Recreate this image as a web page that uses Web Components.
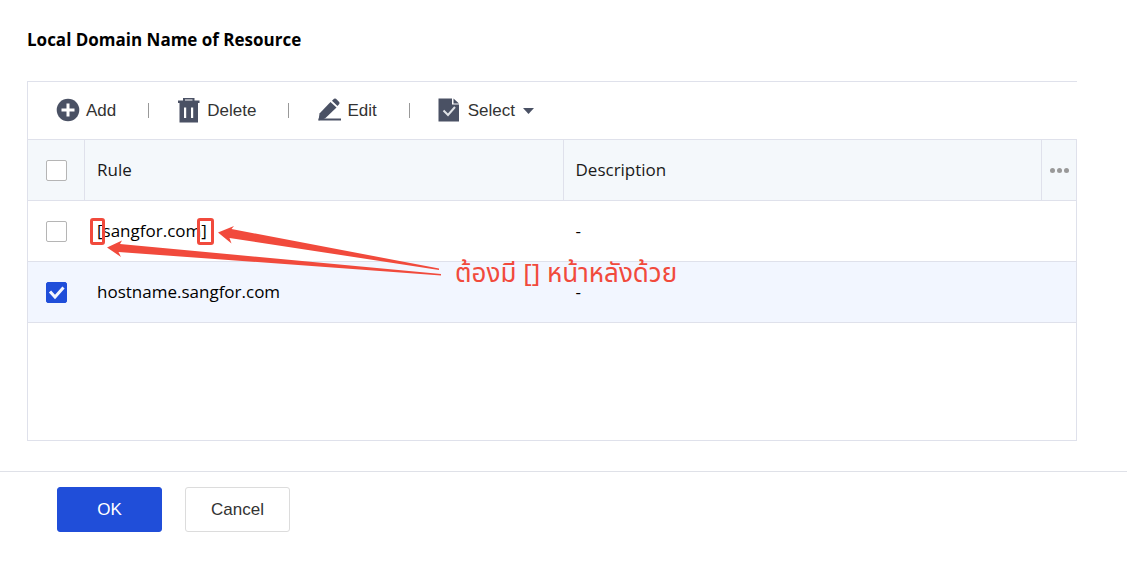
<!DOCTYPE html>
<html lang="en">
<head>
<meta charset="utf-8">
<title>Local Domain Name of Resource</title>
<style>
  body { margin: 0; background: #fff; color: #000; font-family: "Open Sans", "Noto Sans", sans-serif; font-size: 17px; }
</style>
</head>
<body>
<domain-page></domain-page>

<template id="t-page">
  <style>
    :host { display: block; }
    main { padding: 28px 50px 30px 27px; }
    h1 { margin: 0 0 29px; font-size: 17px; line-height: 24px; font-weight: 700; }
    .panel { border: 1px solid #dfe1eb; border-right: 0; }
    .grid { position: relative; border-top: 1px solid #dfe1eb; border-right: 1px solid #dfe1eb; min-height: 300px; }
    footer { border-top: 1px solid #dfe1e8; padding: 15px 57px; display: flex; gap: 23px; }
  </style>
  <main>
    <h1>Local Domain Name of Resource</h1>
    <div class="panel">
      <tool-bar></tool-bar>
      <div class="grid">
        <domain-table></domain-table>
        <bracket-note>ต้องมี [] หน้าหลังด้วย</bracket-note>
      </div>
    </div>
  </main>
  <footer>
    <action-button kind="primary">OK</action-button>
    <action-button>Cancel</action-button>
  </footer>
</template>

<template id="t-toolbar">
  <style>
    :host { display: flex; align-items: center; height: 57px; padding-left: 28px; }
    i { width: 1px; height: 15px; background: #999; margin: 0 29px 0 32px; }
    svg { display: block; }
  </style>
  <tool-button>
    <svg slot="icon" width="24" height="24" viewBox="0 0 24 24"><circle cx="12" cy="11" r="11.300" fill="#4a5164"/><path d="M12 4.500v13M5.500 11h13" stroke="#fff" stroke-width="3"/></svg>
    Add</tool-button>
  <i></i>
  <tool-button>
    <svg slot="icon" width="23" height="24" viewBox="0 1 23 24"><path fill="#4a5164" fill-rule="evenodd" d="M5 0H16.500v2.500h5V5H0V2.500h5zM7 1.500v1h7.500v-1zM1.500 5H20v19.500H1.500zM6 9.500v10.500h2.200V9.500zM13 9.500v10.500h2.200V9.500z"/></svg>
    Delete</tool-button>
  <i></i>
  <tool-button>
    <svg slot="icon" width="23" height="24" viewBox="0 1 23 24"><g fill="#4a5164"><path d="M12.500 4l6 5.500L7 20.500 0.500 22.500 1.500 15.500z"/><path d="M14 2.800L16 .8q1-.8 2 0l3.200 3.200q.8 1 0 2L19.500 8z"/><path d="M0.500 20.500H23V22.500H0.500z"/></g></svg>
    Edit</tool-button>
  <i></i>
  <tool-button>
    <svg slot="icon" width="23" height="24" viewBox="1 1 23 24"><path fill="#4a5164" d="M.5.500H14V6.500h7V23.500H.5z"/><path fill="#4a5164" d="M15.500.5L21 5.500h-5.500z"/><path d="M5.500 12.500l4.500 4.500 7-8" fill="none" stroke="#dfe2e6" stroke-width="2"/></svg>
    Select
    <svg slot="after" width="11" height="6" viewBox="0 0 11 6"><path fill="#4a5164" d="M0 0h11L5.500 6z"/></svg></tool-button>
</template>

<template id="t-toolbutton">
  <style>
    :host { display: block; }
    button { display: flex; align-items: center; gap: 6px; padding: 0; border: 0; background: none; color: #333; font: 17px/24px "Liberation Sans", Arial, sans-serif; cursor: pointer; }
    ::slotted([slot="icon"]) { overflow: visible; }
    ::slotted([slot="after"]) { margin-left: 2px; }
  </style>
  <button type="button"><slot name="icon"></slot><span><slot></slot></span><slot name="after"></slot></button>
</template>

<template id="t-table">
  <style>
    :host { display: block; }
    table { width: 100%; table-layout: fixed; border-collapse: separate; border-spacing: 0; }
    .pick { width: 56px; } .more { width: 35px; }
    th, td { box-sizing: border-box; height: 61px; padding: 0 0 0 12px; border-bottom: 1px solid #dfe1eb; text-align: left; font-weight: 400; line-height: 24px; }
    th { background: #f4f8fb; color: #1a1a1a; }
    th + th { border-left: 1px solid #dfe1eb; }
    th:first-child, td:first-child { padding: 0 0 0 18px; }
    td + td { padding-left: 13px; }
    th:last-child { padding: 0; }
    tr.on td { background: #f2f6ff; }
    button { display: block; margin: 0 auto; padding: 8px; border: 0; background: none; }
    svg { display: block; }
  </style>
  <table>
    <colgroup><col class="pick"><col><col><col class="more"></colgroup>
    <thead>
      <tr><th><check-box label="Select all"></check-box></th><th>Rule</th><th>Description</th>
        <th><button type="button" aria-label="Columns"><svg width="19" height="5" viewBox="0 0 19 5" fill="#999"><circle cx="2.500" cy="2.500" r="2.500"/><circle cx="9.500" cy="2.500" r="2.500"/><circle cx="16.500" cy="2.500" r="2.500"/></svg></button></th></tr>
    </thead>
    <tbody>
      <tr><td><check-box label="[sangfor.com]"></check-box></td><td>[sangfor.com]</td><td>-</td><td></td></tr>
      <tr class="on"><td><check-box label="hostname.sangfor.com" checked></check-box></td><td>hostname.sangfor.com</td><td>-</td><td></td></tr>
    </tbody>
  </table>
</template>

<template id="t-check">
  <style>
    :host { display: grid; width: 21px; height: 21px; }
    input, svg { grid-area: 1 / 1; }
    input { appearance: none; box-sizing: border-box; width: 21px; height: 21px; margin: 0; border: 1px solid #b5b5b5; border-radius: 2px; background: #fff; }
    input:checked { background: #204ed9; border-color: #204ed9; }
    svg { display: none; pointer-events: none; z-index: 1; }
    input:checked + svg { display: block; }
  </style>
  <input type="checkbox">
  <svg width="21" height="21" viewBox="0 0 21 21"><path d="M4 9.500l5 5.500 8.500-9.500" fill="none" stroke="#f4f6fd" stroke-width="3"/></svg>
</template>

<template id="t-note">
  <style>
    :host { position: absolute; top: 77px; left: 62px; color: #f14a3c; pointer-events: none; }
    svg { display: block; }
    p { position: absolute; left: 365px; top: 41px; margin: 0; font: 26px/32px "Noto Sans Thai", "Noto Sans", "Open Sans", sans-serif; white-space: nowrap; }
  </style>
  <svg width="354" height="62" viewBox="90 217 354 62">
    <g fill="none" stroke="#f14a3c" stroke-width="3"><rect x="91.500" y="219.500" width="12" height="24" rx="1.500"/><rect x="198.500" y="219.500" width="14" height="24" rx="1.500"/></g>
    <g fill="#f14a3c"><path d="M218 232.500L234 226l-2.500 3L439 268.500v1.500L229.500 238l2 5.500z"/><path d="M107 247.500L122 240.500l-2 3.500L441 274v1.500L118.500 252l2.500 5z"/></g>
  </svg>
  <p><slot></slot></p>
</template>

<template id="t-action">
  <style>
    :host { display: block; }
    button { box-sizing: border-box; width: 105px; height: 45px; padding: 0; border: 1px solid #dcdcdc; border-radius: 3px; background: #fff; color: #333; font: 17px/24px "Liberation Sans", Arial, sans-serif; cursor: pointer; }
    :host([kind="primary"]) button { background: #204ed9; border-color: #204ed9; color: #fff; }
  </style>
  <button type="button"><slot></slot></button>
</template>

<script>
  class Base extends HTMLElement {
    constructor() {
      super();
      const t = document.getElementById(this.constructor.template);
      this.attachShadow({ mode: "open" }).append(document.importNode(t.content, true));
    }
  }
  class CheckBox extends Base {
    static template = "t-check";
    connectedCallback() {
      const input = this.shadowRoot.querySelector("input");
      input.checked = this.hasAttribute("checked");
      input.setAttribute("aria-label", this.getAttribute("label") || "");
    }
  }
  customElements.define("check-box", CheckBox);
  customElements.define("tool-button", class extends Base { static template = "t-toolbutton"; });
  customElements.define("tool-bar", class extends Base { static template = "t-toolbar"; });
  customElements.define("domain-table", class extends Base { static template = "t-table"; });
  customElements.define("bracket-note", class extends Base { static template = "t-note"; });
  customElements.define("action-button", class extends Base { static template = "t-action"; });
  customElements.define("domain-page", class extends Base { static template = "t-page"; });
</script>
</body>
</html>
